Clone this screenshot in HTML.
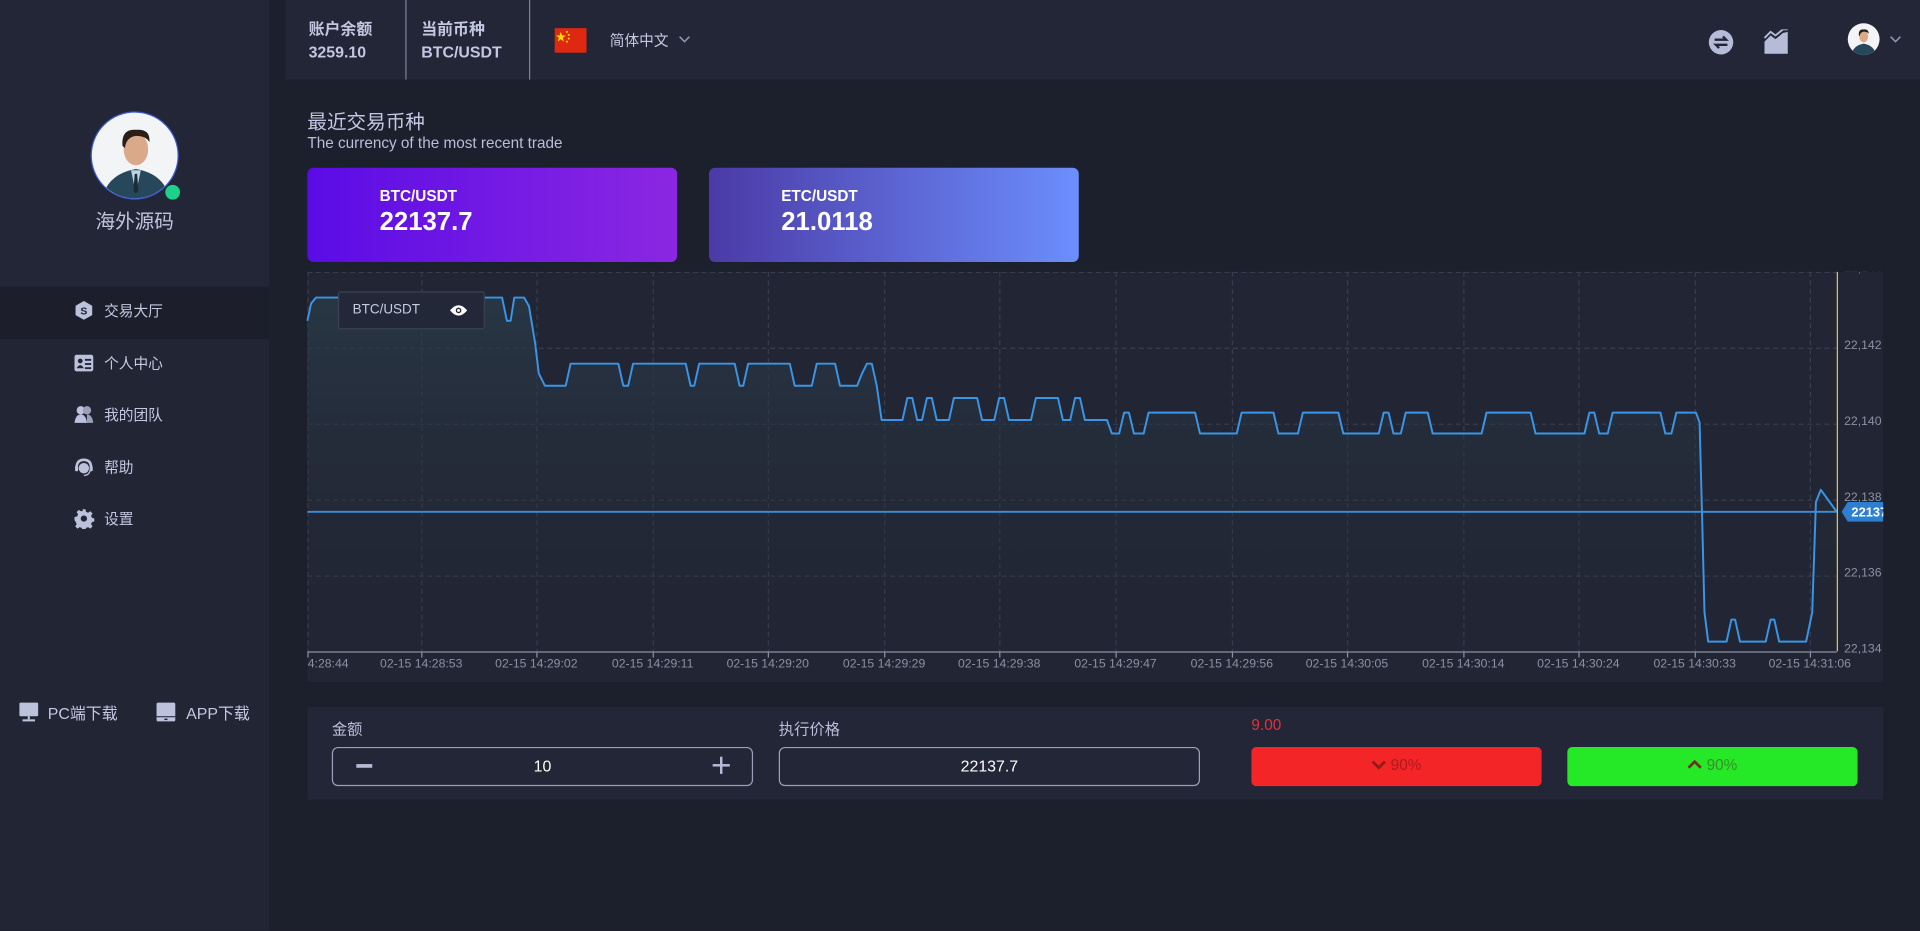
<!DOCTYPE html>
<html><head><meta charset="utf-8"><style>
*{margin:0;padding:0;box-sizing:border-box}
html,body{width:1920px;height:930px;overflow:hidden;background:#1c1f2c;font-family:"Liberation Sans","Noto Sans CJK SC",sans-serif}
#w{position:absolute;left:0;top:0;width:1568px;height:760px;transform:scale(1.22449);transform-origin:0 0;background:#1c1f2c}
.a{position:absolute}
.lav{color:#bfc5e0}
.mi{position:absolute;left:60px;display:flex;align-items:center;font-size:12px;color:#c3c8e2}
.mi svg{width:17px;height:17px;margin-right:8px}
.xl{position:absolute;top:537px;font-size:10px;color:#8b90a3;transform:translateX(-50%);white-space:nowrap}
.yl{position:absolute;left:1506px;font-size:10px;color:#8b90a3}
</style></head><body><div id="w">
<!-- sidebar -->
<div class="a" style="left:0;top:0;width:220px;height:234px;background:#232636"></div>
<div class="a" style="left:0;top:234px;width:220px;height:43px;background:#1c1f2b"></div>
<div class="a" style="left:0;top:277px;width:220px;height:483px;background:#222534"></div>
<div class="a" style="left:74px;top:91px;width:72px;height:72px;border-radius:50%;background:#f2f4f6;border:1px solid #3a5bd0;overflow:hidden">
<svg width="72" height="72" viewBox="0 0 72 72"><path d="M8 72 Q12 50 36 46 Q60 50 64 72Z" fill="#27485a"/><path d="M32 47 L36 66 L40 47Z" fill="#b8d4e6"/><path d="M35 50 L37 50 L38 64 L36 66 L34 64Z" fill="#1d2b36"/><ellipse cx="36" cy="30" rx="10" ry="13" fill="#d9a98a"/><path d="M25 27 Q24 13 36 14 Q48 13 47 24 Q44 19 36 19 Q28 20 27 29Z" fill="#2a1e18"/></svg></div>
<div class="a" style="left:135px;top:151px;width:12px;height:12px;border-radius:50%;background:#1ed18a"></div>
<div class="a lav" style="left:0;width:220px;top:167px;text-align:center;font-size:16px;color:#c0c5dd">海外源码</div>
<div class="mi" style="top:245px"><svg viewBox="0 0 20 20"><path d="M10 1 L18 5.5 V14.5 L10 19 L2 14.5 V5.5Z" fill="#bcc2dc"/><text x="10" y="14" font-size="10" text-anchor="middle" fill="#1c1f2b" font-weight="bold">S</text></svg>交易大厅</div>
<div class="mi" style="top:288px"><svg viewBox="0 0 20 20"><rect x="1" y="2" width="18" height="16" rx="2" fill="#bcc2dc"/><circle cx="6.5" cy="8" r="2.3" fill="#222534"/><path d="M3 15 Q6.5 9 10 15Z" fill="#222534"/><rect x="11" y="6" width="6" height="1.8" fill="#222534"/><rect x="11" y="10" width="6" height="1.8" fill="#222534"/><rect x="11" y="14" width="6" height="1.8" fill="#222534"/></svg>个人中心</div>
<div class="mi" style="top:330px"><svg viewBox="0 0 20 20"><circle cx="7" cy="6" r="4" fill="#bcc2dc"/><circle cx="13" cy="6" r="4" fill="#9aa0ba"/><path d="M1 18 Q2 10 7 10 Q12 10 13 18Z" fill="#bcc2dc"/><path d="M13 10 Q18 10 19 18 H13Z" fill="#9aa0ba"/></svg>我的团队</div>
<div class="mi" style="top:373px"><svg viewBox="0 0 20 20"><path d="M3 11 Q3 3 10 3 Q17 3 17 11" stroke="#bcc2dc" stroke-width="2.5" fill="none"/><circle cx="10" cy="11" r="5" fill="#bcc2dc"/><rect x="1.5" y="9" width="3" height="5" rx="1" fill="#bcc2dc"/><rect x="15.5" y="9" width="3" height="5" rx="1" fill="#bcc2dc"/><path d="M10 18 Q15 18 16 13" stroke="#bcc2dc" stroke-width="1.2" fill="none"/></svg>帮助</div>
<div class="mi" style="top:415px"><svg viewBox="0 0 20 20"><path d="M8.5 1h3l.5 2.5 2 .9 2.2-1.4 2.1 2.1-1.4 2.2.9 2 2.5.5v3l-2.5.5-.9 2 1.4 2.2-2.1 2.1-2.2-1.4-2 .9-.5 2.5h-3l-.5-2.5-2-.9-2.2 1.4-2.1-2.1 1.4-2.2-.9-2L1 11.5v-3l2.5-.5.9-2L3 3.8 5.1 1.7l2.2 1.4 2-.9z" fill="#bcc2dc"/><circle cx="10" cy="10" r="3" fill="#222534"/></svg>设置</div>
<div class="a" style="left:15px;top:572px;display:flex;align-items:center;font-size:13px;color:#c3c8e2"><svg width="17" height="17" viewBox="0 0 20 20" style="margin-right:7px"><rect x="1" y="1" width="18" height="13" rx="1" fill="#bcc2dc"/><rect x="9" y="14" width="2" height="3" fill="#bcc2dc"/><rect x="4" y="17" width="12" height="2" fill="#bcc2dc"/></svg>PC端下载</div>
<div class="a" style="left:127px;top:572px;display:flex;align-items:center;font-size:13px;color:#c3c8e2"><svg width="17" height="17" viewBox="0 0 20 20" style="margin-right:8px"><rect x="1" y="1" width="18" height="18" rx="1.5" fill="#bcc2dc"/><rect x="1" y="14" width="18" height="1" fill="#222534"/><rect x="8.5" y="16.3" width="3" height="1.4" fill="#222534"/></svg>APP下载</div>
<!-- header -->
<div class="a" style="left:233px;top:0;width:1335px;height:65px;background:#232636"></div>
<div class="a" style="left:331px;top:0;width:1px;height:65px;background:#7a7f95"></div>
<div class="a" style="left:432px;top:0;width:1px;height:65px;background:#7a7f95"></div>
<div class="a" style="left:252px;top:14px;font-size:13px;font-weight:bold;color:#c3c8e2;line-height:19px">账户余额<br>3259.10</div>
<div class="a" style="left:344px;top:14px;font-size:13px;font-weight:bold;color:#c3c8e2;line-height:19px">当前币种<br>BTC/USDT</div>
<div class="a" style="left:453px;top:23px;width:26px;height:20px;background:#de2910"><svg width="26" height="20" viewBox="0 0 26 20"><polygon points="5,3 6,6 9,6 6.6,7.8 7.5,11 5,9 2.5,11 3.4,7.8 1,6 4,6" fill="#ffde00"/><circle cx="10" cy="3" r=".8" fill="#ffde00"/><circle cx="11.5" cy="5.5" r=".8" fill="#ffde00"/><circle cx="11.5" cy="8.5" r=".8" fill="#ffde00"/><circle cx="10" cy="11" r=".8" fill="#ffde00"/></svg></div>
<div class="a" style="left:498px;top:24px;font-size:12px;color:#c3c8e2">简体中文</div>
<svg class="a" style="left:554px;top:28px" width="10" height="8" viewBox="0 0 10 8"><path d="M1 2 L5 6 L9 2" stroke="#8f95ad" stroke-width="1.3" fill="none"/></svg>
<svg class="a" style="left:1395px;top:24px" width="21" height="21" viewBox="0 0 20 20"><circle cx="10" cy="10" r="9.5" fill="#b6bcd8"/><path d="M5 8 H14 L11.5 5.5 M15 12 H6 L8.5 14.5" stroke="#232636" stroke-width="1.8" fill="none"/></svg>
<svg class="a" style="left:1440px;top:24px" width="21" height="20" viewBox="0 0 21 20"><path d="M1 10 L6 5 L10 8 L16 3 L20 2 V20 H1Z" fill="#b6bcd8"/><path d="M1 7 L6 2 L10 5 L16 0 L20 0" stroke="#b6bcd8" stroke-width="1.5" fill="none"/></svg>
<div class="a" style="left:1509px;top:19px;width:26px;height:26px;border-radius:50%;background:#f2f4f6;overflow:hidden"><svg width="26" height="26" viewBox="0 0 72 72"><path d="M8 72 Q12 50 36 46 Q60 50 64 72Z" fill="#27485a"/><ellipse cx="36" cy="30" rx="10" ry="13" fill="#d9a98a"/><path d="M25 27 Q24 13 36 14 Q48 13 47 24 Q44 19 36 19 Q28 20 27 29Z" fill="#2a1e18"/></svg></div>
<svg class="a" style="left:1543px;top:28px" width="10" height="8" viewBox="0 0 10 8"><path d="M1 2 L5 6 L9 2" stroke="#8f95ad" stroke-width="1.3" fill="none"/></svg>
<!-- title -->
<div class="a" style="left:251px;top:86px;font-size:16px;color:#c3c8e2">最近交易币种</div>
<div class="a" style="left:251px;top:110px;font-size:12.5px;color:#b8bedb">The currency of the most recent trade</div>
<div class="a" style="left:251px;top:137px;width:302px;height:77px;border-radius:5px;background:linear-gradient(90deg,#5a0ce5,#8b27e2)"></div>
<div class="a" style="left:310px;top:153px;font-size:12.5px;font-weight:bold;color:#fff">BTC/USDT</div>
<div class="a" style="left:310px;top:170px;font-size:21px;font-weight:bold;color:#fff">22137.7</div>
<div class="a" style="left:579px;top:137px;width:302px;height:77px;border-radius:5px;background:linear-gradient(90deg,#4b3aa6,#6c8efd)"></div>
<div class="a" style="left:638px;top:153px;font-size:12.5px;font-weight:bold;color:#fff">ETC/USDT</div>
<div class="a" style="left:638px;top:170px;font-size:21px;font-weight:bold;color:#fff">21.0118</div>
<!-- chart -->
<div class="a" style="left:251px;top:222px;width:1287px;height:335px;background:#222634"></div>
<svg class="a" style="left:0;top:0" width="1568" height="760" viewBox="0 0 1568 760">
<defs><linearGradient id="g" x1="0" y1="0" x2="0" y2="1"><stop offset="0" stop-color="#2a3c4a" stop-opacity=".75"/><stop offset="1" stop-color="#222634" stop-opacity="0"/></linearGradient></defs>
<g stroke="#373c4e" stroke-width="1" stroke-dasharray="4 3">
<line x1="251" y1="222.5" x2="1500" y2="222.5"/><line x1="251" y1="284.5" x2="1500" y2="284.5"/><line x1="251" y1="346.5" x2="1500" y2="346.5"/><line x1="251" y1="408.5" x2="1500" y2="408.5"/><line x1="251" y1="470.5" x2="1500" y2="470.5"/>
<line x1="251.5" y1="222" x2="251.5" y2="532"/>
<line x1="344.5" y1="222" x2="344.5" y2="532"/><line x1="438.5" y1="222" x2="438.5" y2="532"/><line x1="533.5" y1="222" x2="533.5" y2="532"/><line x1="627.5" y1="222" x2="627.5" y2="532"/><line x1="722.5" y1="222" x2="722.5" y2="532"/><line x1="816.5" y1="222" x2="816.5" y2="532"/><line x1="911.5" y1="222" x2="911.5" y2="532"/><line x1="1006.5" y1="222" x2="1006.5" y2="532"/><line x1="1100.5" y1="222" x2="1100.5" y2="532"/><line x1="1195.5" y1="222" x2="1195.5" y2="532"/><line x1="1289.5" y1="222" x2="1289.5" y2="532"/><line x1="1384.5" y1="222" x2="1384.5" y2="532"/><line x1="1478.5" y1="222" x2="1478.5" y2="532"/>
</g>
<polygon fill="url(#g)" points="251,262 254,248 258,243 410,243 414,262 417,262 420,243 428,243 432,250 437,280 440,305 445,315 462,315 466,297 505,297 509,315 513,315 517,297 560,297 564,315 567,315 571,297 600,297 604,315 607,315 611,297 645,297 649,315 663,315 667,297 682,297 686,315 700,315 704,305 708,297 712,297 716,315 720,343 737,343 741,325 745,325 749,343 753,343 757,325 761,325 765,343 775,343 779,325 798,325 802,343 812,343 816,325 820,325 824,343 842,343 846,325 864,325 868,343 874,343 878,325 882,325 886,343 904,343 908,354 914,354 918,337 922,337 926,354 934,354 938,337 976,337 980,354 1010,354 1014,337 1040,337 1044,354 1060,354 1064,337 1093,337 1097,354 1126,354 1130,337 1134,337 1138,354 1144,354 1148,337 1166,337 1170,354 1210,354 1214,337 1250,337 1254,354 1294,354 1298,337 1302,337 1306,354 1313,354 1317,337 1356,337 1360,354 1365,354 1369,337 1385,337 1388,345 1390,420 1392,500 1395,524 1410,524 1414,506 1417,506 1421,524 1442,524 1446,506 1449,506 1453,524 1475,524 1480,500 1483,410 1487,400 1500,418 1500,532 251,532"/>
<line x1="251" y1="418" x2="1500" y2="418" stroke="#3a8fdc" stroke-width="1.5"/>
<polyline fill="none" stroke="#3a95e6" stroke-width="1.6" stroke-linejoin="round" points="251,262 254,248 258,243 410,243 414,262 417,262 420,243 428,243 432,250 437,280 440,305 445,315 462,315 466,297 505,297 509,315 513,315 517,297 560,297 564,315 567,315 571,297 600,297 604,315 607,315 611,297 645,297 649,315 663,315 667,297 682,297 686,315 700,315 704,305 708,297 712,297 716,315 720,343 737,343 741,325 745,325 749,343 753,343 757,325 761,325 765,343 775,343 779,325 798,325 802,343 812,343 816,325 820,325 824,343 842,343 846,325 864,325 868,343 874,343 878,325 882,325 886,343 904,343 908,354 914,354 918,337 922,337 926,354 934,354 938,337 976,337 980,354 1010,354 1014,337 1040,337 1044,354 1060,354 1064,337 1093,337 1097,354 1126,354 1130,337 1134,337 1138,354 1144,354 1148,337 1166,337 1170,354 1210,354 1214,337 1250,337 1254,354 1294,354 1298,337 1302,337 1306,354 1313,354 1317,337 1356,337 1360,354 1365,354 1369,337 1385,337 1388,345 1390,420 1392,500 1395,524 1410,524 1414,506 1417,506 1421,524 1442,524 1446,506 1449,506 1453,524 1475,524 1480,500 1483,410 1487,400 1500,418"/>
<line x1="1500.5" y1="222" x2="1500.5" y2="532" stroke="#e5c84a" stroke-width="1"/>
<line x1="251" y1="532.5" x2="1500" y2="532.5" stroke="#8a8fa3" stroke-width="1"/>
<g stroke="#8a8fa3"><line x1="251.5" y1="532" x2="251.5" y2="537"/><line x1="344.5" y1="532" x2="344.5" y2="537"/><line x1="438.5" y1="532" x2="438.5" y2="537"/><line x1="533.5" y1="532" x2="533.5" y2="537"/><line x1="627.5" y1="532" x2="627.5" y2="537"/><line x1="722.5" y1="532" x2="722.5" y2="537"/><line x1="816.5" y1="532" x2="816.5" y2="537"/><line x1="911.5" y1="532" x2="911.5" y2="537"/><line x1="1006.5" y1="532" x2="1006.5" y2="537"/><line x1="1100.5" y1="532" x2="1100.5" y2="537"/><line x1="1195.5" y1="532" x2="1195.5" y2="537"/><line x1="1289.5" y1="532" x2="1289.5" y2="537"/><line x1="1384.5" y1="532" x2="1384.5" y2="537"/><line x1="1478.5" y1="532" x2="1478.5" y2="537"/></g>
</svg>
<div class="a" style="left:1538px;top:214px;width:30px;height:350px;background:#1c1f2c"></div>
<div class="a" style="left:1500px;top:222px;width:38px;height:5px;overflow:hidden"><div class="a" style="left:6px;top:-8px;font-size:10px;color:#8b90a3">22,144</div></div>
<div class="yl" style="top:277px">22,142</div>
<div class="yl" style="top:339px">22,140</div>
<div class="yl" style="top:401px">22,138</div>
<div class="yl" style="top:463px">22,136</div>
<div class="yl" style="top:525px">22,134</div>
<svg class="a" style="left:1500px;top:405px" width="38" height="26" viewBox="0 0 38 26">
<path d="M4 13 L9 5 H38 V21 H9Z" fill="#2e7fcf"/>
<text x="12" y="17" font-size="10.5" font-weight="bold" fill="#fff" font-family="Liberation Sans">22137</text>
</svg>
<div class="xl" style="left:268px">4:28:44</div>
<div class="xl" style="left:344px">02-15 14:28:53</div>
<div class="xl" style="left:438px">02-15 14:29:02</div>
<div class="xl" style="left:533px">02-15 14:29:11</div>
<div class="xl" style="left:627px">02-15 14:29:20</div>
<div class="xl" style="left:722px">02-15 14:29:29</div>
<div class="xl" style="left:816px">02-15 14:29:38</div>
<div class="xl" style="left:911px">02-15 14:29:47</div>
<div class="xl" style="left:1006px">02-15 14:29:56</div>
<div class="xl" style="left:1100px">02-15 14:30:05</div>
<div class="xl" style="left:1195px">02-15 14:30:14</div>
<div class="xl" style="left:1289px">02-15 14:30:24</div>
<div class="xl" style="left:1384px">02-15 14:30:33</div>
<div class="xl" style="left:1478px">02-15 14:31:06</div>
<div class="a" style="left:276px;top:238px;width:120px;height:31px;background:#232838;border:1px solid #3b4052;border-radius:2px"></div>
<div class="a" style="left:288px;top:247px;font-size:11px;color:#c8cce0">BTC/USDT</div>
<svg class="a" style="left:367px;top:248px" width="15" height="11" viewBox="0 0 15 11"><path d="M0.5 5.5 Q7.5 -3 14.5 5.5 Q7.5 14 0.5 5.5Z" fill="#fff"/><circle cx="7.5" cy="5.5" r="2.3" fill="#232838"/><circle cx="7.5" cy="5.5" r="1.2" fill="#fff"/></svg>
<!-- trade panel -->
<div class="a" style="left:251px;top:577px;width:1287px;height:76px;background:#232636"></div>
<div class="a" style="left:271px;top:585px;font-size:12.5px;color:#b8bedb">金额</div>
<div class="a" style="left:636px;top:585px;font-size:12.5px;color:#b8bedb">执行价格</div>
<div class="a" style="left:1022px;top:585px;font-size:12.5px;color:#e8303a">9.00</div>
<div class="a" style="left:271px;top:610px;width:344px;height:32px;border:1px solid #9aa0bd;border-radius:5px"></div>
<div class="a" style="left:291px;top:624px;width:13px;height:2.5px;background:#b6bcd8"></div>
<div class="a" style="left:582px;top:624px;width:14px;height:2px;background:#b6bcd8"></div>
<div class="a" style="left:588px;top:618px;width:2px;height:14px;background:#b6bcd8"></div>
<div class="a" style="left:271px;top:618px;width:344px;text-align:center;font-size:13px;color:#fff">10</div>
<div class="a" style="left:636px;top:610px;width:344px;height:32px;border:1px solid #9aa0bd;border-radius:5px"></div>
<div class="a" style="left:636px;top:618px;width:344px;text-align:center;font-size:13px;color:#fff">22137.7</div>
<div class="a" style="left:1022px;top:610px;width:237px;height:32px;background:#f42527;border-radius:4px"></div>
<div class="a" style="left:1022px;top:618px;width:237px;text-align:center;font-size:12.5px;color:#a81c1f"><svg width="12" height="9" viewBox="0 0 12 9" style="vertical-align:0"><path d="M1 2 L6 7 L11 2" stroke="#8e1a1c" stroke-width="2.2" fill="none"/></svg> 90%</div>
<div class="a" style="left:1280px;top:610px;width:237px;height:32px;background:#25e826;border-radius:4px"></div>
<div class="a" style="left:1280px;top:618px;width:237px;text-align:center;font-size:12.5px;color:#3a8d2a"><svg width="12" height="9" viewBox="0 0 12 9" style="vertical-align:0"><path d="M1 7 L6 2 L11 7" stroke="#6a3020" stroke-width="2.2" fill="none"/></svg> 90%</div>
</div></body></html>
